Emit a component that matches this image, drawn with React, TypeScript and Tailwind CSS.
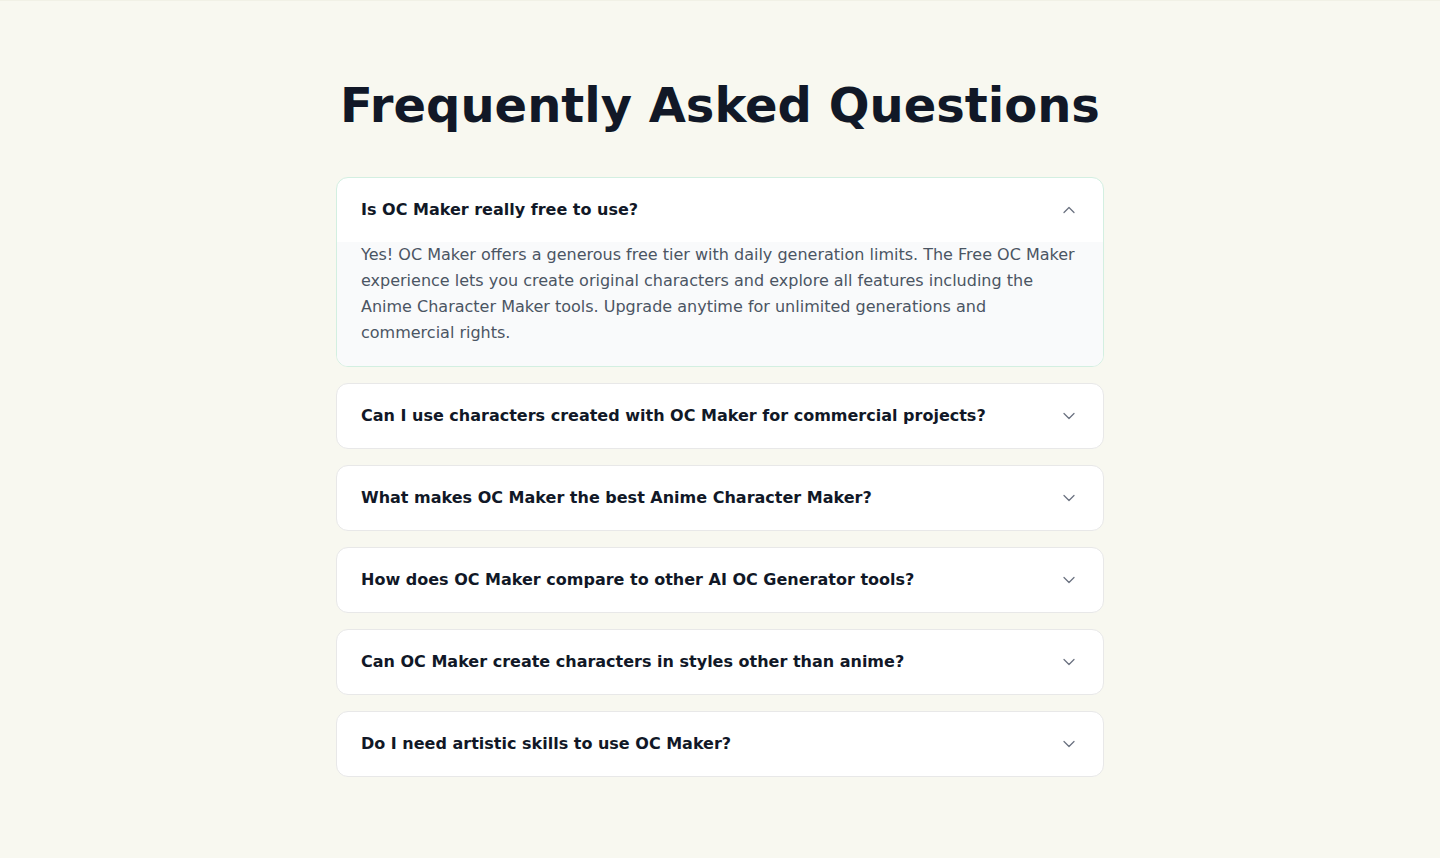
import { useState } from 'react';
import { ChevronDown } from 'lucide-react';

const FAQS = [
    {
        q: 'Is OC Maker really free to use?',
        a: 'Yes! OC Maker offers a generous free tier with daily generation limits. The Free OC Maker experience lets you create original characters and explore all features including the Anime Character Maker tools. Upgrade anytime for unlimited generations and commercial rights.',
    },
    {
        q: 'Can I use characters created with OC Maker for commercial projects?',
        a: 'Paid plans include full commercial rights, so you can use your characters in games, comics, merchandise and more.',
    },
    {
        q: 'What makes OC Maker the best Anime Character Maker?',
        a: 'OC Maker combines fine-tuned anime models with detailed character controls for consistent, high quality results.',
    },
    {
        q: 'How does OC Maker compare to other AI OC Generator tools?',
        a: 'OC Maker focuses on original character design with consistent traits, outfits and styles across generations.',
    },
    {
        q: 'Can OC Maker create characters in styles other than anime?',
        a: 'Yes, you can choose from several art styles including semi-realistic, chibi, and western cartoon.',
    },
    {
        q: 'Do I need artistic skills to use OC Maker?',
        a: 'Not at all. Just describe your character and OC Maker does the drawing for you.',
    },
];

export default function App() {
    const [open, setOpen] = useState<number | null>(0);

    return (
        <div className="min-h-screen bg-[#f8f8f0] border-t border-[#f1f1e6] font-['DejaVu_Sans','Liberation_Sans',sans-serif]">
            <section className="max-w-3xl mx-auto pt-20 pb-20">
                <h2 className="text-5xl leading-none font-bold text-[#111827] text-center mb-12">Frequently Asked Questions</h2>

                <div className="space-y-4">
                    {FAQS.map((item, i) => {
                        const isOpen = open === i;
                        return (
                            <div
                                key={item.q}
                                className={`bg-white rounded-xl border overflow-hidden ${isOpen ? 'border-[#d3efe1]' : 'border-[#e8e8e8]'}`}
                            >
                                <button
                                    onClick={() => setOpen(isOpen ? null : i)}
                                    className="w-full flex items-center justify-between px-6 py-5 text-left"
                                >
                                    <span className="text-base leading-6 font-bold text-[#111827]">{item.q}</span>
                                    <ChevronDown
                                        className={`w-5 h-5 text-[#6b7280] shrink-0 ${isOpen ? 'rotate-180' : ''}`}
                                        strokeWidth={1.5}
                                    />
                                </button>
                                {isOpen && (
                                    <div className="bg-[#f9fafb] px-6 pb-5">
                                        <p className="text-base leading-[26px] text-[#4b5563]">{item.a}</p>
                                    </div>
                                )}
                            </div>
                        );
                    })}
                </div>
            </section>
        </div>
    );
}
